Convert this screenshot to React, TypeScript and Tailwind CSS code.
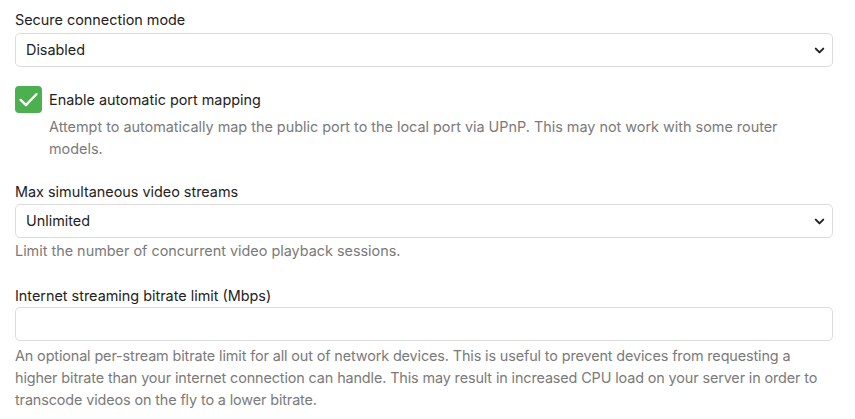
import React from 'react';

const Chevron = () => (
  <svg className="w-[15px] h-[15px] text-[#222]" fill="none" stroke="currentColor" viewBox="0 0 24 24">
    <path strokeLinecap="round" strokeLinejoin="round" strokeWidth={3.2} d="M6 9l6 6 6-6" />
  </svg>
);

const SelectBox: React.FC<{ value: string }> = ({ value }) => (
  <div className="h-[34px] flex items-center justify-between border border-[#dcdcdc] rounded-[5px] bg-white pl-[10px] pr-[5px]">
    <span>{value}</span>
    <Chevron />
  </div>
);

const App: React.FC = () => {
  return (
    <div
      className="w-[855px] h-[419px] bg-white text-[14.4px] text-[#222] px-[15px] pt-[10px] overflow-hidden"
      style={{ fontFamily: 'Inter, "Noto Sans", sans-serif' }}
    >
      <div className="w-[818px]">
        <div className="leading-5 mb-[3px]">Secure connection mode</div>
        <SelectBox value="Disabled" />

        <div className="mt-[19px] flex items-center gap-[7px]">
          <div className="w-[27px] h-[27px] rounded-[4px] bg-[#4caf50] flex items-center justify-center">
            <svg className="w-[21px] h-[21px] text-white" fill="none" stroke="currentColor" viewBox="0 0 24 24">
              <path strokeLinecap="round" strokeLinejoin="round" strokeWidth={2.8} d="M3 12.5l6 6L21 6" />
            </svg>
          </div>
          <span className="leading-5">Enable automatic port mapping</span>
        </div>
        <p className="ml-[34px] mt-[3px] leading-[22px] text-[#7a7a7a]">
          Attempt to automatically map the public port to the local port via UPnP. This may not work with some router
          models.
        </p>

        <div className="leading-5 mt-[22px] mb-[2px]">Max simultaneous video streams</div>
        <SelectBox value="Unlimited" />
        <p className="leading-[22px] mt-[2px] text-[#7a7a7a]">Limit the number of concurrent video playback sessions.</p>

        <div className="leading-5 mt-[24px] mb-[1px]">Internet streaming bitrate limit (Mbps)</div>
        <div className="h-[34px] border border-[#dcdcdc] rounded-[5px] bg-white" />
        <p className="leading-[22px] mt-[4px] text-[#7a7a7a] tracking-[-0.12px] whitespace-nowrap">
          An optional per-stream bitrate limit for all out of network devices. This is useful to prevent devices from
          requesting a<br />
          higher bitrate than your internet connection can handle. This may result in increased CPU load on your server
          in order to<br />
          transcode videos on the fly to a lower bitrate.
        </p>
      </div>
    </div>
  );
};

export default App;
